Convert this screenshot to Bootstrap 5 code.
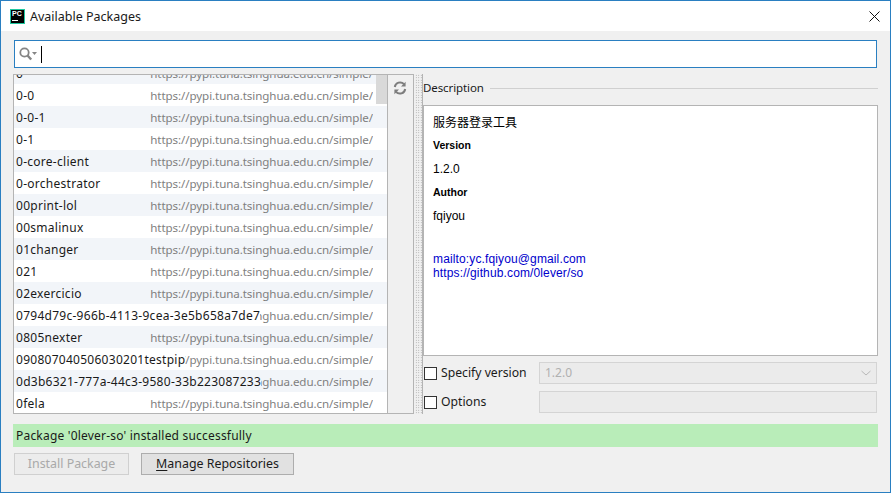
<!DOCTYPE html>
<html lang="en">
<head>
<meta charset="utf-8">
<title>Available Packages</title>
<link href="https://cdn.jsdelivr.net/npm/bootstrap@5.3.0/dist/css/bootstrap.min.css" rel="stylesheet">
<script src="https://cdn.jsdelivr.net/npm/bootstrap@5.3.0/dist/js/bootstrap.bundle.min.js"></script>
<style>
html,body{margin:0;height:493px;overflow:hidden;background:#f0f0f0}
body{font-family:"Noto Sans","Noto Sans CJK SC",sans-serif;font-size:12px;color:#1a1a1a;line-height:1.2}
.win{width:891px;height:493px;border:1px solid #2a7fc1;background:#f0f0f0;display:flex;flex-direction:column}
.ttl{height:30px;background:#fff;flex:none;padding:0 10px 0 9px}
.ttl-text{font-size:12.5px;margin-left:5px}
.pclogo{width:15px;height:15px;background:#000;border:1px solid #21c8a0;color:#fff;font:bold 7px/8px "Liberation Sans",sans-serif;padding-left:1px;flex:none}
.pclogo::after{content:"";display:block;width:6px;height:1px;background:#fff;margin-top:2px}
.srch{height:28px;margin:9px 13px 0 13px;background:#fff;border:1px solid #2a7fc1;flex:none;padding-left:4px}
.caret-bar{width:1px;height:17px;background:#000;margin-left:4px}
.mid{margin:6px 13px 0 12px;height:340px;flex:none}
.lst{width:374px;border:1px solid #b4b4b4;border-right:0;overflow:hidden;position:relative;background:#fff;flex:none}
.lst-in{margin-top:-13px}
.rw{height:22px;padding:0 14px 0 2px;font-size:12px;white-space:nowrap;line-height:23px}
.rw:nth-child(even){background:#fff}
.rw:nth-child(odd){background:#f2f5f9}
.rw-n{flex:none;min-width:134px;letter-spacing:.27px}
.rw-w{flex:1 1 0;min-width:0;overflow:hidden}
.rw-u{flex:none;color:#7f7f7f;font-size:11.6px;letter-spacing:-.09px}
.thumb{position:absolute;right:0;top:0;width:11px;height:29px;background:#d9d9d9;z-index:2}
.tool{width:27px;border:1px solid #b4b4b4;flex:none;padding-top:6px;padding-right:1px}
.split{width:8px;flex:none;margin-left:1px;border-right:1px solid #b4b4b4;background-image:radial-gradient(#9a9a9a 0.6px,transparent .7px);background-size:2.5px 2.5px;height:340px}
.rgt{width:455px;flex:none}
.dsc-h{height:31px;flex:none;font-size:11.5px;letter-spacing:-.1px;padding-bottom:3px}
.dsc-rule{height:1px;background:#d0d0d0;margin-left:6px;margin-top:1px}
.dsc{height:251px;background:#fff;border:1px solid #b4b4b4;padding:10px 9px;font-family:"Liberation Sans","Noto Sans CJK SC",sans-serif;font-size:12px;color:#000;flex:none}
.dsc p{margin:0}
.dsc a{color:#0000cc;text-decoration:none;display:block;line-height:14px;letter-spacing:.13px}
.dsc-t{font-size:12px;line-height:14px}
.dsc-b{font-size:10.5px;font-weight:700;line-height:12px}
.dsc .g9{margin-top:9px}
.dsc .g10{margin-top:10px}
.dsc .g11{margin-top:11px}
.dsc .g28{margin-top:28px}
.opt{height:22px;margin-top:7px;flex:none}
.opt-first{margin-top:6px}
.cbx{width:13px;height:13px;border:1px solid #333;background:#fff;flex:none;margin-left:1px}
.opt-l{width:102px;padding-left:4px;font-size:12.2px;flex:none}
.fld{width:338px;height:22px;background:#ebebeb;border:1px solid #d4d4d4;color:#b0b0b0;padding:0 5px;font-size:12px;flex:none}
.okbar{height:23px;background:#b9edb9;margin:10px 12px 0 12px;padding-left:3px;font-size:12px;line-height:23px;flex:none;letter-spacing:.2px}
.acts{margin:6px 0 0 13px;flex:none}
.bt{height:22px;border:1px solid #adadad;background:#e1e1e1;font-size:12.4px;line-height:20px;text-align:center;flex:none}
.bt1{width:115px;color:#a9a9a9;border-color:#d0d0d0;background:#ececec}
.bt2{width:153px;margin-left:12px;color:#1a1a1a}
.bt2 u{text-underline-offset:2px}
</style>
</head>
<body>
<div class="win">
  <div class="ttl d-flex align-items-center">
    <div class="pclogo">PC</div>
    <div class="ttl-text">Available Packages</div>
    <svg class="ms-auto" width="11" height="11" viewBox="0 0 11 11"><path d="M.5.5l10 10M10.5.5l-10 10" stroke="#111" stroke-width="1" fill="none"/></svg>
  </div>
  <div class="srch d-flex align-items-center">
    <svg width="18" height="14" viewBox="0 0 18 14"><circle cx="5.5" cy="5.5" r="4.2" fill="none" stroke="#858585" stroke-width="1.8"/><path d="M8.5 8.5l3.7 4" stroke="#858585" stroke-width="2.4"/><path d="M13 5h5l-2.5 3z" fill="#858585"/></svg>
    <div class="caret-bar"></div>
  </div>
  <div class="mid d-flex">
    <div class="lst">
      <div class="thumb"></div>
      <div class="lst-in">
        <div class="rw d-flex"><span class="rw-n">0</span><div class="rw-w d-flex justify-content-end"><span class="rw-u">https://pypi.tuna.tsinghua.edu.cn/simple/</span></div></div>
        <div class="rw d-flex"><span class="rw-n">0-0</span><div class="rw-w d-flex justify-content-end"><span class="rw-u">https://pypi.tuna.tsinghua.edu.cn/simple/</span></div></div>
        <div class="rw d-flex"><span class="rw-n">0-0-1</span><div class="rw-w d-flex justify-content-end"><span class="rw-u">https://pypi.tuna.tsinghua.edu.cn/simple/</span></div></div>
        <div class="rw d-flex"><span class="rw-n">0-1</span><div class="rw-w d-flex justify-content-end"><span class="rw-u">https://pypi.tuna.tsinghua.edu.cn/simple/</span></div></div>
        <div class="rw d-flex"><span class="rw-n">0-core-client</span><div class="rw-w d-flex justify-content-end"><span class="rw-u">https://pypi.tuna.tsinghua.edu.cn/simple/</span></div></div>
        <div class="rw d-flex"><span class="rw-n">0-orchestrator</span><div class="rw-w d-flex justify-content-end"><span class="rw-u">https://pypi.tuna.tsinghua.edu.cn/simple/</span></div></div>
        <div class="rw d-flex"><span class="rw-n">00print-lol</span><div class="rw-w d-flex justify-content-end"><span class="rw-u">https://pypi.tuna.tsinghua.edu.cn/simple/</span></div></div>
        <div class="rw d-flex"><span class="rw-n">00smalinux</span><div class="rw-w d-flex justify-content-end"><span class="rw-u">https://pypi.tuna.tsinghua.edu.cn/simple/</span></div></div>
        <div class="rw d-flex"><span class="rw-n">01changer</span><div class="rw-w d-flex justify-content-end"><span class="rw-u">https://pypi.tuna.tsinghua.edu.cn/simple/</span></div></div>
        <div class="rw d-flex"><span class="rw-n">021</span><div class="rw-w d-flex justify-content-end"><span class="rw-u">https://pypi.tuna.tsinghua.edu.cn/simple/</span></div></div>
        <div class="rw d-flex"><span class="rw-n">02exercicio</span><div class="rw-w d-flex justify-content-end"><span class="rw-u">https://pypi.tuna.tsinghua.edu.cn/simple/</span></div></div>
        <div class="rw d-flex"><span class="rw-n">0794d79c-966b-4113-9cea-3e5b658a7de7</span><div class="rw-w d-flex justify-content-end"><span class="rw-u">https://pypi.tuna.tsinghua.edu.cn/simple/</span></div></div>
        <div class="rw d-flex"><span class="rw-n">0805nexter</span><div class="rw-w d-flex justify-content-end"><span class="rw-u">https://pypi.tuna.tsinghua.edu.cn/simple/</span></div></div>
        <div class="rw d-flex"><span class="rw-n">090807040506030201testpip</span><div class="rw-w d-flex justify-content-end"><span class="rw-u">https://pypi.tuna.tsinghua.edu.cn/simple/</span></div></div>
        <div class="rw d-flex"><span class="rw-n">0d3b6321-777a-44c3-9580-33b223087233</span><div class="rw-w d-flex justify-content-end"><span class="rw-u">https://pypi.tuna.tsinghua.edu.cn/simple/</span></div></div>
        <div class="rw d-flex"><span class="rw-n">0fela</span><div class="rw-w d-flex justify-content-end"><span class="rw-u">https://pypi.tuna.tsinghua.edu.cn/simple/</span></div></div>
      </div>
    </div>
    <div class="tool d-flex justify-content-center align-items-start">
      <svg width="14" height="14" viewBox="0 0 14 14"><path d="M1.8 6A5.3 5.3 0 0 1 11 3.2M12.2 8A5.3 5.3 0 0 1 3 10.8" fill="none" stroke="#7d7d7d" stroke-width="2"/><path d="M12.6 .8V5.4H8zM1.4 13.2V8.6H6z" fill="#7d7d7d"/></svg>
    </div>
    <div class="split"></div>
    <div class="rgt d-flex flex-column">
      <div class="dsc-h d-flex align-items-center"><span>Description</span><div class="dsc-rule flex-grow-1"></div></div>
      <div class="dsc">
        <p class="dsc-t">服务器登录工具</p>
        <p class="dsc-b g9">Version</p>
        <p class="g11">1.2.0</p>
        <p class="dsc-b g10">Author</p>
        <p class="g11">fqiyou</p>
        <a href="#" class="g28">mailto:yc.fqiyou@gmail.com</a>
        <a href="#">https://github.com/0lever/so</a>
      </div>
      <div class="opt opt-first d-flex align-items-center">
        <div class="cbx"></div><div class="opt-l">Specify version</div>
        <div class="fld d-flex align-items-center justify-content-between"><span>1.2.0</span><svg width="10" height="6" viewBox="0 0 10 6"><path d="M.5 1l4.5 4 4.5-4" fill="none" stroke="#b8b8b8"/></svg></div>
      </div>
      <div class="opt d-flex align-items-center">
        <div class="cbx"></div><div class="opt-l">Options</div>
        <div class="fld"></div>
      </div>
    </div>
  </div>
  <div class="okbar">Package '0lever-so' installed successfully</div>
  <div class="acts d-flex">
    <div class="bt bt1">Install Package</div>
    <div class="bt bt2"><u>M</u>anage Repositories</div>
  </div>
</div>
</body>
</html>
